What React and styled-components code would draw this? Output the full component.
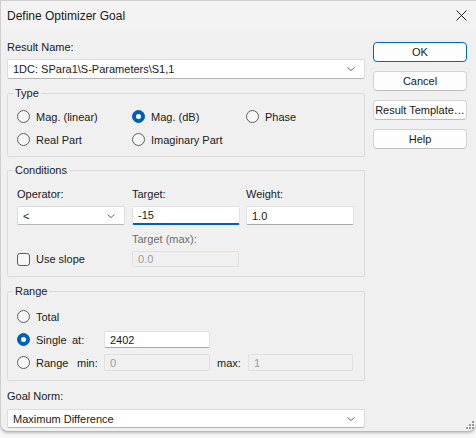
import React from "react";
import styled, { createGlobalStyle } from "styled-components";

const GlobalStyle = createGlobalStyle`
  html, body {
    margin: 0;
    padding: 0;
    background: #f7f7f7;
  }
  body {
    font-family: "Liberation Sans", Arial, sans-serif;
    font-size: 11px;
    color: #1a1a1a;
  }
  * { box-sizing: border-box; }
`;

const Page = styled.div`
  width: 476px;
  height: 438px;
  overflow: hidden;
`;

const Window = styled.div`
  position: relative;
  width: 476px;
  height: 432px;
  background: #f0f0f0;
  border-top: 1px solid #cfcfcf;
  border-bottom: 1px solid #b9b9b9;
  border-left: 1px solid #cfcfcf;
  border-radius: 0 0 8px 8px;
  box-shadow: 0 1px 3px rgba(0, 0, 0, 0.25);
`;

const TitleBar = styled.div`
  height: 29px;
  display: flex;
  align-items: center;
  justify-content: space-between;
  padding: 0 9px 0 6px;
  background: #f3f3f3;
`;

const Title = styled.span`
  font-size: 12px;
  color: #1a1a1a;
`;

const Body = styled.div`
  display: flex;
  gap: 8px;
  padding: 10px 0 0 6px;
`;

const Main = styled.div`
  width: 358px;
  display: flex;
  flex-direction: column;
`;

const Side = styled.div`
  width: 94px;
  margin-top: 2px;
  display: flex;
  flex-direction: column;
  gap: 9px;
`;

const Button = styled.div`
  height: 20px;
  display: flex;
  align-items: center;
  justify-content: center;
  white-space: nowrap;
  background: #fdfdfd;
  border: 1px solid ${(p) => (p.$primary ? "#0067c0" : "#d3d3d3")};
  border-bottom-color: ${(p) => (p.$primary ? "#0067c0" : "#bdbdbd")};
  border-radius: 4px;
  color: #1a1a1a;
`;

const Label = styled.div`
  line-height: 14px;
  height: 14px;
  margin-top: ${(p) => p.$mt || 0}px;
  color: ${(p) => (p.$muted ? "#6d6d6d" : "#1a1a1a")};
  white-space: nowrap;
`;

const ComboBox = styled.div`
  height: ${(p) => p.$h || 20}px;
  width: ${(p) => (p.$w ? `${p.$w}px` : "100%")};
  margin-top: ${(p) => p.$mt || 0}px;
  display: flex;
  align-items: center;
  justify-content: space-between;
  padding: 0 8px 0 5px;
  background: #ffffff;
  border: 1px solid #dcdcdc;
  border-bottom-color: #b5b5b5;
  border-radius: 2px;
`;

const Field = styled.div`
  height: ${(p) => p.$h || 19}px;
  width: ${(p) => p.$w || 108}px;
  margin-top: ${(p) => p.$mt || 0}px;
  display: flex;
  align-items: center;
  padding: 0 5px;
  background: ${(p) => (p.$disabled ? "#f0f0f0" : "#ffffff")};
  color: ${(p) => (p.$disabled ? "#9b9b9b" : "#1a1a1a")};
  border: 1px solid ${(p) => (p.$disabled ? "#e0e0e0" : "#e2e2e2")};
  border-bottom: ${(p) =>
    p.$focused
      ? "2px solid #005fb8"
      : p.$disabled
      ? "1px solid #e0e0e0"
      : "1px solid #a9a9a9"};
  border-radius: 2px;
`;

const Group = styled.fieldset`
  margin: ${(p) => p.$mt || 0}px 0 0 0;
  padding: ${(p) => p.$pt || 5}px 9px ${(p) => p.$pb || 5}px 9px;
  border: 1px solid #dadada;
  border-radius: 2px;
  min-width: 0;
`;

const Legend = styled.legend`
  line-height: 14px;
  padding: 0 2px;
  margin-left: -4px;
`;

const TypeGrid = styled.div`
  display: grid;
  grid-template-columns: 115px 114px 1fr;
  grid-auto-rows: 23px;
  align-items: center;
`;

const CondGrid = styled.div`
  display: grid;
  grid-template-columns: 115px 114px 108px;
  align-items: center;
`;

const RangeGrid = styled.div`
  display: grid;
  grid-template-columns: 55px 32px 106px 38px 105px;
  grid-auto-rows: 23px;
  align-items: center;
`;

const Option = styled.div`
  display: flex;
  align-items: center;
  gap: 6px;
  white-space: nowrap;
  margin-top: ${(p) => p.$mt || 0}px;
  grid-column: ${(p) => p.$col || "auto"};
`;

const RadioDot = styled.span`
  width: 13px;
  height: 13px;
  flex: none;
  border-radius: 50%;
  display: flex;
  align-items: center;
  justify-content: center;
  background: ${(p) => (p.$on ? "#005fb8" : "#f7f7f7")};
  border: 1px solid ${(p) => (p.$on ? "#005fb8" : "#5f5f5f")};

  &::after {
    content: "";
    display: ${(p) => (p.$on ? "block" : "none")};
    width: 5px;
    height: 5px;
    border-radius: 50%;
    background: #ffffff;
  }
`;

const CheckBox = styled.span`
  width: 13px;
  height: 13px;
  flex: none;
  border-radius: 3px;
  background: #f7f7f7;
  border: 1px solid #5f5f5f;
`;

const SubLabel = styled.span`
  padding-left: ${(p) => p.$pl || 0}px;
  white-space: nowrap;
`;

const Grip = styled.svg`
  position: absolute;
  right: 2px;
  bottom: 2px;
`;

const Chevron = () => (
  <svg width="10" height="6" viewBox="0 0 10 6">
    <path d="M1.5 1.5 L5 4.5 L8.5 1.5" fill="none" stroke="#6a6a6a" strokeWidth="1" />
  </svg>
);

const CloseIcon = () => (
  <svg width="11" height="11" viewBox="0 0 11 11">
    <path d="M0.5 0.5 L10.5 10.5 M10.5 0.5 L0.5 10.5" stroke="#1a1a1a" strokeWidth="1" />
  </svg>
);

const Radio = ({ on, children, col }) => (
  <Option $col={col}>
    <RadioDot $on={on} />
    {children}
  </Option>
);

export default function App() {
  return (
    <Page>
      <GlobalStyle />
      <Window>
        <TitleBar>
          <Title>Define Optimizer Goal</Title>
          <CloseIcon />
        </TitleBar>
        <Body>
          <Main>
            <Label>Result Name:</Label>
            <ComboBox $mt={5}>
              <span>1DC: SPara1\S-Parameters\S1,1</span>
              <Chevron />
            </ComboBox>

            <Group $mt={7} $pt={5} $pb={5}>
              <Legend>Type</Legend>
              <TypeGrid>
                <Radio>Mag. (linear)</Radio>
                <Radio on>Mag. (dB)</Radio>
                <Radio>Phase</Radio>
                <Radio>Real Part</Radio>
                <Radio>Imaginary Part</Radio>
              </TypeGrid>
            </Group>

            <Group $mt={6} $pt={10} $pb={9}>
              <Legend>Conditions</Legend>
              <CondGrid>
                <Label>Operator:</Label>
                <Label>Target:</Label>
                <Label>Weight:</Label>
                <ComboBox $w={108} $h={19} $mt={5}>
                  <span>&lt;</span>
                  <Chevron />
                </ComboBox>
                <Field $focused $mt={5}>-15</Field>
                <Field $mt={5}>1.0</Field>
                <span />
                <Label $muted $mt={7}>Target (max):</Label>
                <span />
                <Option $mt={5}>
                  <CheckBox />
                  Use slope
                </Option>
                <Field $disabled $h={16} $w={107} $mt={5}>0.0</Field>
              </CondGrid>
            </Group>

            <Group $mt={7} $pt={7} $pb={6}>
              <Legend>Range</Legend>
              <RangeGrid>
                <Radio col="1 / 3">Total</Radio>
                <span />
                <span />
                <span />
                <Radio on>Single</Radio>
                <SubLabel>at:</SubLabel>
                <Field $h={17} $w={106}>2402</Field>
                <span />
                <span />
                <Radio>Range</Radio>
                <SubLabel $pl={5}>min:</SubLabel>
                <Field $disabled $h={17} $w={106}>0</Field>
                <SubLabel $pl={7}>max:</SubLabel>
                <Field $disabled $h={17} $w={105}>1</Field>
              </RangeGrid>
            </Group>

            <Label $mt={8}>Goal Norm:</Label>
            <ComboBox $mt={6} $h={19}>
              <span>Maximum Difference</span>
              <Chevron />
            </ComboBox>
          </Main>
          <Side>
            <Button $primary>OK</Button>
            <Button>Cancel</Button>
            <Button>Result Template…</Button>
            <Button>Help</Button>
          </Side>
        </Body>
        <Grip width="9" height="9" viewBox="0 0 9 9">
          <g fill="#9a9a9a">
            <rect x="7" y="1" width="2" height="2" />
            <rect x="4" y="4" width="2" height="2" />
            <rect x="7" y="4" width="2" height="2" />
            <rect x="1" y="7" width="2" height="2" />
            <rect x="4" y="7" width="2" height="2" />
            <rect x="7" y="7" width="2" height="2" />
          </g>
        </Grip>
      </Window>
    </Page>
  );
}
